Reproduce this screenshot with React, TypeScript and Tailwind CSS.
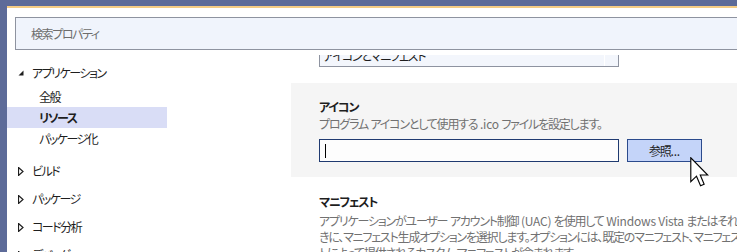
import React, { type FC } from "react";

const font = "font-['Noto_Sans_CJK_JP','Noto_Sans',sans-serif] [font-feature-settings:'palt']";

const Expanded: FC = () => (
	<svg width="6" height="6" viewBox="0 0 6 6" className="shrink-0">
		<polygon points="5.5,0.5 5.5,5.5 0.5,5.5" fill="#1e1e1e" />
	</svg>
);

const Collapsed: FC = () => (
	<svg width="6" height="9" viewBox="0 0 6 9" className="shrink-0">
		<polygon points="0.5,0.5 5,4.5 0.5,8.5" fill="none" stroke="#1e1e1e" strokeWidth="1.2" />
	</svg>
);

const Pointer: FC = () => (
	<svg
		width="19"
		height="30"
		viewBox="0 0 12.6 20"
		className="absolute left-[690px] top-[157px]"
	>
		<path
			d="M0.5 0.5 L0.5 16.5 L4.3 12.8 L7 19.2 L9.4 18.2 L6.8 12 L11.8 12 Z"
			fill="#ffffff"
			stroke="#000000"
			strokeWidth="0.75"
			strokeLinejoin="miter"
		/>
	</svg>
);

const NavRoot: FC<{ label: string; open?: boolean; className?: string }> = ({ label, open, className }) => (
	<div className={`flex items-center gap-[8px] pl-[11px] text-[#1e1e1e] ${className ?? "h-7"}`}>
		<span className="w-[6px] flex justify-center">{open ? <Expanded /> : <Collapsed />}</span>
		<span>{label}</span>
	</div>
);

const NavChild: FC<{ label: string; active?: boolean }> = ({ label, active }) => (
	<div
		className={`h-[21px] flex items-center pl-[32px] text-[#1e1e1e] ${
			active ? "bg-[#d9ddf6] font-bold" : ""
		}`}
	>
		{label}
	</div>
);

// latin runs and spaces keep their natural spacing, kana get squeezed
const L: FC<{ children: React.ReactNode }> = ({ children }) => (
	<span className="tracking-[-0.2px]">{children}</span>
);

export default function App() {
	return (
		<div className={`relative w-[737px] h-[252px] overflow-hidden bg-[#5d6b99] pl-[7px] pt-[6px] text-[12px] leading-4 ${font}`}>
			<div className="h-full bg-white border-t-2 border-[#f5cc84] flex flex-col">
				<div className="mt-[9px] ml-[8px] h-[33px] w-[740px] shrink-0 border border-[#8e93a0] bg-[#f0f4fc] flex items-center pl-[15px] text-[#6d6d6d] tracking-[-1.4px]">
					検索プロパティ
				</div>
				<div className="flex flex-1 min-h-0">
					<nav className="w-[160px] shrink-0 pt-[10px] tracking-[-1.5px]">
						<NavRoot label="アプリケーション" open className="h-[26px]" />
						<NavChild label="全般" />
						<NavChild label="リソース" active />
						<NavChild label="パッケージ化" />
						<div className="mt-2">
							<NavRoot label="ビルド" />
							<NavRoot label="パッケージ" />
							<NavRoot label="コード分析" />
							<NavRoot label="デバッグ" />
						</div>
					</nav>
					<main className="ml-[124px] mt-[5px] flex-1 min-w-0 overflow-hidden tracking-[-1.2px]">
						<div className="ml-[28px] mt-[-10px] w-[300px] h-[22px] border border-[#8e93a0] bg-[#f3f6fc] flex">
							<div className="flex-1 flex items-center pl-[3px] text-[#1e1e1e]">アイコンとマニフェスト</div>
							<div className="w-[14px] border-l border-[#ffffff]" />
						</div>
						<section className="mt-[16px] bg-[#f5f5f5] pl-[28px] pt-[16px] pb-[15px]">
							<h2 className="font-bold text-[#1e1e1e]">アイコン</h2>
							<p className="mt-px text-[#717171]">
								プログラム<L> </L>アイコンとして使用する<L> .ico </L>ファイルを設定します。
							</p>
							<div className="mt-[7px] flex gap-[8px]">
								<div className="w-[300px] h-[23px] border border-[#1f3a70] bg-[#fdfdfd] flex items-center pl-[5px]">
									<span className="w-px h-[14px] bg-black" />
								</div>
								<button className="w-[75px] h-[23px] border border-[#2b4a8c] bg-[#c4d4f9] text-[#1e1e1e] flex items-center justify-center">
									参照<L>...</L>
								</button>
							</div>
						</section>
						<section className="pl-[28px] pt-[17px] whitespace-nowrap">
							<h2 className="font-bold text-[#1e1e1e]">マニフェスト</h2>
							<div className="mt-[3px] text-[#717171]">
								<p>
									アプリケーションがユーザー<L> </L>アカウント制御<L> (UAC) </L>を使用して<L> Windows Vista </L>またはそれ以降で実行されると
								</p>
								<p>きに、マニフェスト生成オプションを選択します。オプションには、既定のマニフェスト、マニフェストなし、またはプロジェク</p>
								<p>
									トによって提供されるカスタム<L> </L>マニフェストが含まれます。
								</p>
							</div>
						</section>
					</main>
				</div>
			</div>
			<Pointer />
		</div>
	);
}
